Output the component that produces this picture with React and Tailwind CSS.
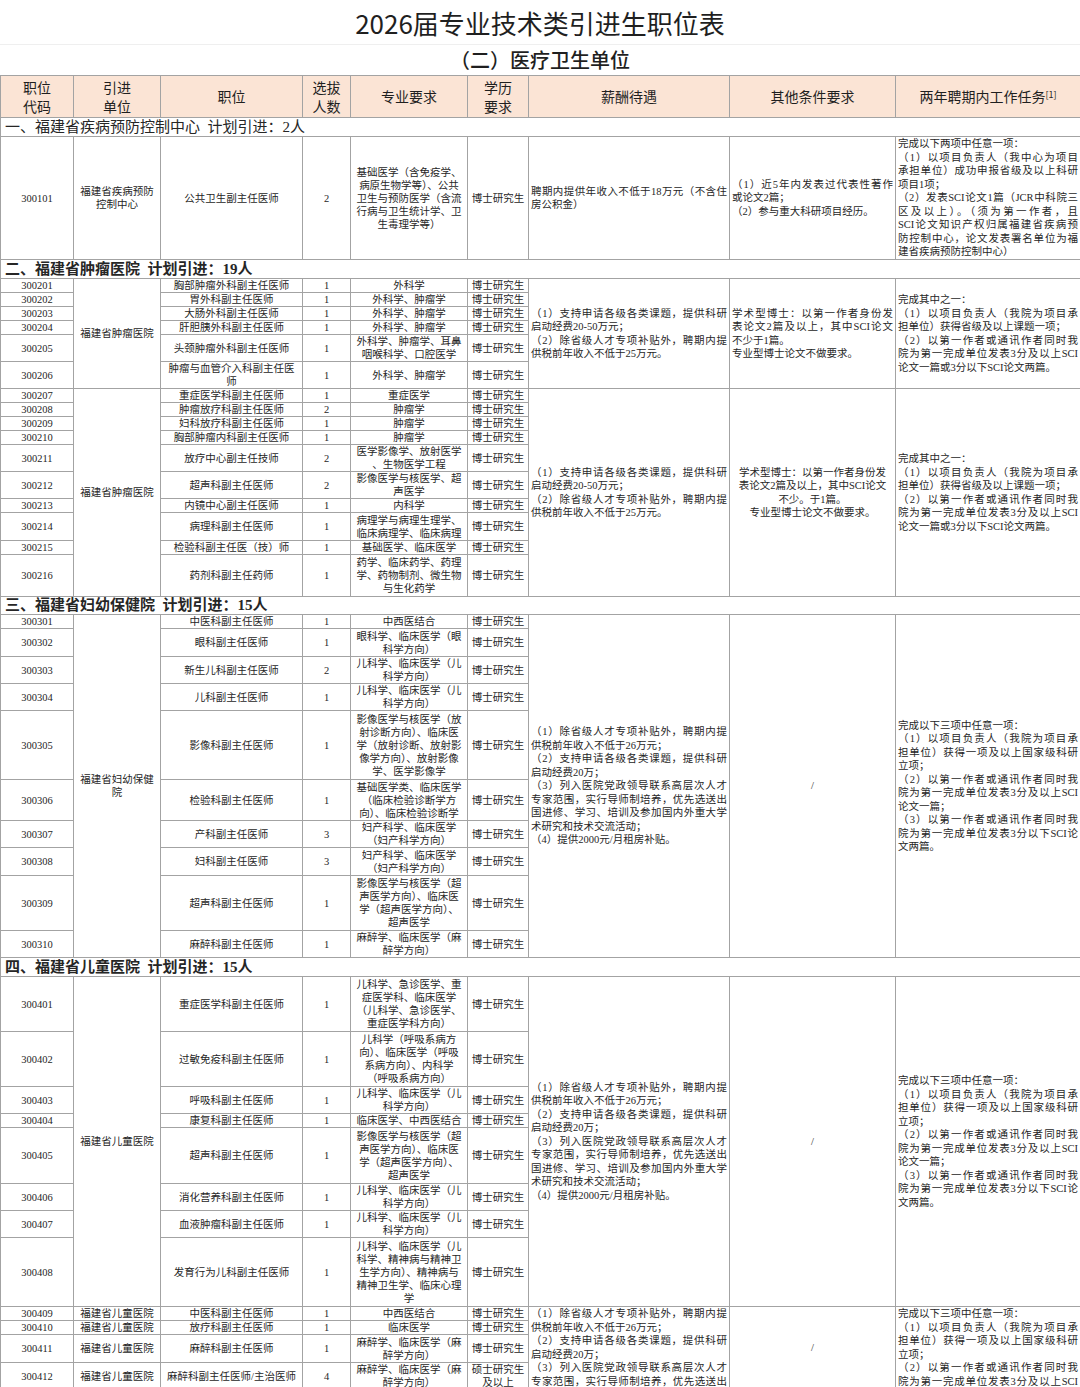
import React from "react";

const B = "border border-[#a3a3a3]";
const BODY = "font-['Liberation_Serif','Noto_Sans_CJK_SC',serif]";
const SANS = "font-['Noto_Sans_CJK_SC',sans-serif]";

const salaryA = [
  "（1）支持申请各级各类课题，提供科研",
  "启动经费20-50万元；",
  "（2）除省级人才专项补贴外，聘期内提",
  "供税前年收入不低于25万元。",
];
const tasksA = [
  "完成其中之一：",
  "（1）以项目负责人（我院为项目承",
  "担单位）获得省级及以上课题一项；",
  "（2）以第一作者或通讯作者同时我",
  "院为第一完成单位发表3分及以上SCI",
  "论文一篇或3分以下SCI论文两篇。",
];
const salaryB = [
  "（1）除省级人才专项补贴外，聘期内提",
  "供税前年收入不低于26万元；",
  "（2）支持申请各级各类课题，提供科研",
  "启动经费20万；",
  "（3）列入医院党政领导联系高层次人才",
  "专家范围，实行导师制培养，优先选送出",
  "国进修、学习、培训及参加国内外重大学",
  "术研究和技术交流活动；",
  "（4）提供2000元/月租房补贴。",
];
const tasksB = [
  "完成以下三项中任意一项：",
  "（1）以项目负责人（我院为项目承",
  "担单位）获得一项及以上国家级科研",
  "立项；",
  "（2）以第一作者或通讯作者同时我",
  "院为第一完成单位发表3分及以上SCI",
  "论文一篇；",
  "（3）以第一作者或通讯作者同时我",
  "院为第一完成单位发表3分以下SCI论",
  "文两篇。",
];

const blocks = [
  { label: "一、福建省疾病预防控制中心  计划引进：2人", bold: false, h: 19 },
  {
    unit: ["福建省疾病预防", "控制中心"],
    rows: [
      ["300101", "公共卫生副主任医师", "2", "基础医学（含免疫学、|病原生物学等）、公共|卫生与预防医学（含流|行病与卫生统计学、卫|生毒理学等）", "博士研究生", 123],
    ],
    salary: ["聘期内提供年收入不低于18万元（不含住", "房公积金）"],
    other: ["（1）近5年内发表过代表性著作", "或论文2篇；", "（2）参与重大科研项目经历。"],
    tasks: [
      "完成以下两项中任意一项：",
      "（1）以项目负责人（我中心为项目",
      "承担单位）成功申报省级及以上科研",
      "项目1项；",
      "（2）发表SCI论文1篇（JCR中科院三",
      "区及以上）。（须为第一作者，且",
      "SCI论文知识产权归属福建省疾病预",
      "防控制中心，论文发表署名单位为福",
      "建省疾病预防控制中心）",
    ],
  },
  { label: "二、福建省肿瘤医院  计划引进：19人", bold: true, h: 19 },
  {
    unit: ["福建省肿瘤医院"],
    rows: [
      ["300201", "胸部肿瘤外科副主任医师", "1", "外科学", "博士研究生", 14],
      ["300202", "胃外科副主任医师", "1", "外科学、肿瘤学", "博士研究生", 14],
      ["300203", "大肠外科副主任医师", "1", "外科学、肿瘤学", "博士研究生", 14],
      ["300204", "肝胆胰外科副主任医师", "1", "外科学、肿瘤学", "博士研究生", 14],
      ["300205", "头颈肿瘤外科副主任医师", "1", "外科学、肿瘤学、耳鼻|咽喉科学、口腔医学", "博士研究生", 27],
      ["300206", "肿瘤与血管介入科副主任医|师", "1", "外科学、肿瘤学", "博士研究生", 27],
    ],
    salary: salaryA,
    other: ["学术型博士：以第一作者身份发", "表论文2篇及以上，其中SCI论文", "不少于1篇。", "专业型博士论文不做要求。"],
    tasks: tasksA,
  },
  {
    unit: ["福建省肿瘤医院"],
    rows: [
      ["300207", "重症医学科副主任医师", "1", "重症医学", "博士研究生", 14],
      ["300208", "肿瘤放疗科副主任医师", "2", "肿瘤学", "博士研究生", 14],
      ["300209", "妇科放疗科副主任医师", "1", "肿瘤学", "博士研究生", 14],
      ["300210", "胸部肿瘤内科副主任医师", "1", "肿瘤学", "博士研究生", 14],
      ["300211", "放疗中心副主任技师", "2", "医学影像学、放射医学|、生物医学工程", "博士研究生", 27],
      ["300212", "超声科副主任医师", "2", "影像医学与核医学、超|声医学", "博士研究生", 27],
      ["300213", "内镜中心副主任医师", "1", "内科学", "博士研究生", 14],
      ["300214", "病理科副主任医师", "1", "病理学与病理生理学、|临床病理学、临床病理", "博士研究生", 28],
      ["300215", "检验科副主任医（技）师", "1", "基础医学、临床医学", "博士研究生", 14],
      ["300216", "药剂科副主任药师", "1", "药学、临床药学、药理|学、药物制剂、微生物|与生化药学", "博士研究生", 42],
    ],
    salary: salaryA,
    other: ["学术型博士：以第一作者身份发", "表论文2篇及以上，其中SCI论文", "不少。于1篇。", "专业型博士论文不做要求。"],
    otherCenter: true,
    tasks: tasksA,
  },
  { label: "三、福建省妇幼保健院  计划引进：15人", bold: true, h: 17 },
  {
    unit: ["福建省妇幼保健", "院"],
    rows: [
      ["300301", "中医科副主任医师", "1", "中西医结合", "博士研究生", 14],
      ["300302", "眼科副主任医师", "1", "眼科学、临床医学（眼|科学方向）", "博士研究生", 28],
      ["300303", "新生儿科副主任医师", "2", "儿科学、临床医学（儿|科学方向）", "博士研究生", 27],
      ["300304", "儿科副主任医师", "1", "儿科学、临床医学（儿|科学方向）", "博士研究生", 27],
      ["300305", "影像科副主任医师", "1", "影像医学与核医学（放|射诊断方向）、临床医|学（放射诊断、放射影|像学方向）、放射影像|学、医学影像学", "博士研究生", 69],
      ["300306", "检验科副主任医师", "1", "基础医学类、临床医学|（临床检验诊断学方|向）、临床检验诊断学", "博士研究生", 41],
      ["300307", "产科副主任医师", "3", "妇产科学、临床医学|（妇产科学方向）", "博士研究生", 27],
      ["300308", "妇科副主任医师", "3", "妇产科学、临床医学|（妇产科学方向）", "博士研究生", 28],
      ["300309", "超声科副主任医师", "1", "影像医学与核医学（超|声医学方向）、临床医|学（超声医学方向）、|超声医学", "博士研究生", 55],
      ["300310", "麻醉科副主任医师", "1", "麻醉学、临床医学（麻|醉学方向）", "博士研究生", 27],
    ],
    salary: salaryB,
    other: ["/"],
    otherCenter: true,
    tasks: tasksB,
  },
  { label: "四、福建省儿童医院  计划引进：15人", bold: true, h: 19 },
  {
    unit: ["福建省儿童医院"],
    rows: [
      ["300401", "重症医学科副主任医师", "1", "儿科学、急诊医学、重|症医学科、临床医学|（儿科学、急诊医学、|重症医学科方向）", "博士研究生", 55],
      ["300402", "过敏免疫科副主任医师", "1", "儿科学（呼吸系病方|向）、临床医学（呼吸|系病方向）、内科学|（呼吸系病方向）", "博士研究生", 55],
      ["300403", "呼吸科副主任医师", "1", "儿科学、临床医学（儿|科学方向）", "博士研究生", 27],
      ["300404", "康复科副主任医师", "1", "临床医学、中西医结合", "博士研究生", 14],
      ["300405", "超声科副主任医师", "1", "影像医学与核医学（超|声医学方向）、临床医|学（超声医学方向）、|超声医学", "博士研究生", 56],
      ["300406", "消化营养科副主任医师", "1", "儿科学、临床医学（儿|科学方向）", "博士研究生", 27],
      ["300407", "血液肿瘤科副主任医师", "1", "儿科学、临床医学（儿|科学方向）", "博士研究生", 27],
      ["300408", "发育行为儿科副主任医师", "1", "儿科学、临床医学（儿|科学、精神病与精神卫|生学方向）、精神病与|精神卫生学、临床心理|学", "博士研究生", 69],
    ],
    salary: salaryB,
    other: ["/"],
    otherCenter: true,
    tasks: tasksB,
  },
  {
    unitPerRow: "福建省儿童医院",
    top: true,
    rows: [
      ["300409", "中医科副主任医师", "1", "中西医结合", "博士研究生", 13],
      ["300410", "放疗科副主任医师", "1", "临床医学", "博士研究生", 14],
      ["300411", "麻醉科副主任医师", "1", "麻醉学、临床医学（麻|醉学方向）", "博士研究生", 28],
      ["300412", "麻醉科副主任医师/主治医师", "4", "麻醉学、临床医学（麻|醉学方向）", "硕士研究生|及以上", 27],
    ],
    salary: salaryB,
    other: ["/"],
    otherCenter: true,
    tasks: tasksB,
  },
];

function Lines({ lines, justify }) {
  return lines.map((l, i) => {
    const end = i === lines.length - 1 || /[；：。]$/.test(l);
    const cls = justify
      ? end
        ? "whitespace-nowrap text-left"
        : "whitespace-nowrap text-left [text-align-last:justify]"
      : "whitespace-nowrap text-center";
    return (
      <div key={i} className={cls}>
        {l}
      </div>
    );
  });
}

const td = `${B} p-0 px-[2px] align-middle text-center`;
const big = `${B} p-0 px-[2px] leading-[13.5px]`;

function Block({ b }) {
  const n = b.rows.length + (b.top ? 1 : 0);
  const out = b.rows.map((r, i) => {
    const [code, pos, count, major, degree, h] = r;
    return (
      <tr key={code} style={{ height: h }}>
        <td className={td}>{code}</td>
        {b.unitPerRow ? (
          <td className={td}>{b.unitPerRow}</td>
        ) : (
          i === 0 && (
            <td className={td} rowSpan={n}>
              <Lines lines={b.unit} />
            </td>
          )
        )}
        <td className={td}>
          <Lines lines={pos.split("|")} />
        </td>
        <td className={td}>{count}</td>
        <td className={td}>
          <Lines lines={major.split("|")} />
        </td>
        <td className={td}>
          <Lines lines={degree.split("|")} />
        </td>
        {i === 0 && (
          <>
            <td className={`${big} ${b.top ? "align-top" : "align-middle"}`} rowSpan={n}>
              <Lines lines={b.salary} justify />
            </td>
            <td className={`${big} ${b.top ? "align-top pt-[34px]" : "align-middle"}`} rowSpan={n}>
              <Lines lines={b.other} justify={!b.otherCenter} />
            </td>
            <td className={`${big} ${b.top ? "align-top" : "align-middle"}`} rowSpan={n}>
              <Lines lines={b.tasks} justify />
            </td>
          </>
        )}
      </tr>
    );
  });
  if (b.top) {
    out.push(
      <tr key="filler" className="h-[110px]">
        <td className={td}></td>
        <td className={td}></td>
        <td className={td}></td>
        <td className={td}></td>
        <td className={td}></td>
        <td className={td}></td>
      </tr>
    );
  }
  return out;
}

export default function App() {
  return (
    <div className="h-[1387px] w-[1080px] overflow-hidden bg-white text-[#262626]">
      <div className={`${SANS} h-[45px] border-b border-[#efefef] text-center text-[26px] leading-[45px] text-[#1f1f1f]`}>
        2026届专业技术类引进生职位表
      </div>
      <div className={`${SANS} h-[30px] text-center text-[20px] leading-[30px] font-medium text-[#1f1f1f]`}>
        （二）医疗卫生单位
      </div>
      <table className={`${BODY} w-[1080px] table-fixed border-collapse text-[10.5px] leading-[13px]`}>
        <colgroup>
          <col className="w-[73px]" />
          <col className="w-[87px]" />
          <col className="w-[142px]" />
          <col className="w-[48px]" />
          <col className="w-[117px]" />
          <col className="w-[61px]" />
          <col className="w-[201px]" />
          <col className="w-[166px]" />
          <col className="w-[185px]" />
        </colgroup>
        <tbody>
          <tr className={`${SANS} h-[42px] bg-[#fbe4d5] text-[14px] leading-[19px] text-[#1f1f1f]`}>
            <td className={`${B} p-0 text-center`}>职位<br />代码</td>
            <td className={`${B} p-0 text-center`}>引进<br />单位</td>
            <td className={`${B} p-0 text-center`}>职位</td>
            <td className={`${B} p-0 text-center`}>选拔<br />人数</td>
            <td className={`${B} p-0 text-center`}>专业要求</td>
            <td className={`${B} p-0 text-center`}>学历<br />要求</td>
            <td className={`${B} p-0 text-center`}>薪酬待遇</td>
            <td className={`${B} p-0 text-center`}>其他条件要求</td>
            <td className={`${B} p-0 text-center`}>
              两年聘期内工作任务<sup className="text-[9px]">[1]</sup>
            </td>
          </tr>
          {blocks.map((b, i) =>
            b.label ? (
              <tr key={i} style={{ height: b.h }}>
                <td
                  colSpan={9}
                  className={`${B} p-0 pl-[4px] text-left text-[15px] leading-[17px] whitespace-pre ${b.bold ? "font-bold" : ""}`}
                >
                  {b.label}
                </td>
              </tr>
            ) : (
              <Block key={i} b={b} />
            )
          )}
        </tbody>
      </table>
    </div>
  );
}
